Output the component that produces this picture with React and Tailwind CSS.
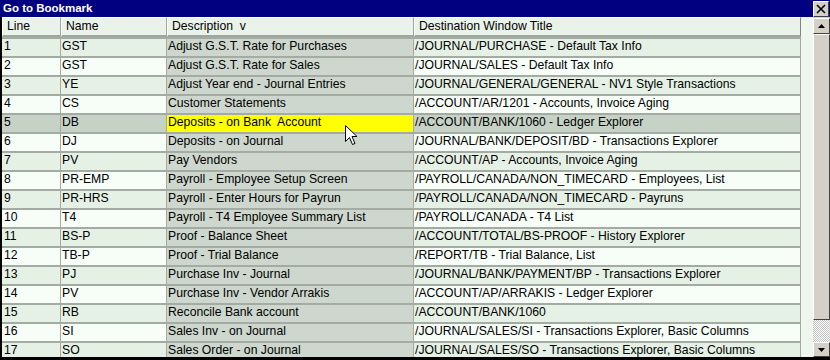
const rows = [
  ["1", "GST", "Adjust G.S.T. Rate for Purchases", "/JOURNAL/PURCHASE - Default Tax Info"],
  ["2", "GST", "Adjust G.S.T. Rate for Sales", "/JOURNAL/SALES - Default Tax Info"],
  ["3", "YE", "Adjust Year end - Journal Entries", "/JOURNAL/GENERAL/GENERAL - NV1 Style Transactions"],
  ["4", "CS", "Customer Statements", "/ACCOUNT/AR/1201 - Accounts, Invoice Aging"],
  ["5", "DB", "Deposits - on Bank  Account", "/ACCOUNT/BANK/1060 - Ledger Explorer"],
  ["6", "DJ", "Deposits - on Journal", "/JOURNAL/BANK/DEPOSIT/BD - Transactions Explorer"],
  ["7", "PV", "Pay Vendors", "/ACCOUNT/AP - Accounts, Invoice Aging"],
  ["8", "PR-EMP", "Payroll - Employee Setup Screen", "/PAYROLL/CANADA/NON_TIMECARD - Employees, List"],
  ["9", "PR-HRS", "Payroll - Enter Hours for Payrun", "/PAYROLL/CANADA/NON_TIMECARD - Payruns"],
  ["10", "T4", "Payroll - T4 Employee Summary List", "/PAYROLL/CANADA - T4 List"],
  ["11", "BS-P", "Proof - Balance Sheet", "/ACCOUNT/TOTAL/BS-PROOF - History Explorer"],
  ["12", "TB-P", "Proof - Trial Balance", "/REPORT/TB - Trial Balance, List"],
  ["13", "PJ", "Purchase Inv - Journal", "/JOURNAL/BANK/PAYMENT/BP - Transactions Explorer"],
  ["14", "PV", "Purchase Inv - Vendor Arrakis", "/ACCOUNT/AP/ARRAKIS - Ledger Explorer"],
  ["15", "RB", "Reconcile Bank account", "/ACCOUNT/BANK/1060"],
  ["16", "SI", "Sales Inv - on Journal", "/JOURNAL/SALES/SI - Transactions Explorer, Basic Columns"],
  ["17", "SO", "Sales Order - on Journal", "/JOURNAL/SALES/SO - Transactions Explorer, Basic Columns"],
];

const SELECTED = 4;

function Cursor() {
  return (
    <svg
      className="absolute left-[345px] top-[125px]"
      width="13"
      height="21"
      viewBox="0 0 13 21"
    >
      <path
        d="M0.5 0.5 L0.5 16.5 L4.5 12.5 L7.5 19.5 L10 18.5 L7 11.5 L12 11.5 Z"
        fill="#ffffff"
        stroke="#000000"
        strokeWidth="1"
      />
    </svg>
  );
}

function HeaderCell({ children, last }) {
  return (
    <div
      className={
        "flex items-center px-[4px] bg-[#eaf3ea] border-t border-l border-t-white border-l-white border-b-2 border-b-[#9ea69e] " +
        (last ? "border-r border-r-[#7e867e]" : "border-r border-r-[#9ea69e]")
      }
    >
      {children}
    </div>
  );
}

export default function App() {
  return (
    <div
      className="relative w-[830px] h-[360px] overflow-hidden bg-black text-[12.2px] leading-none text-black"
      style={{ fontFamily: '"Liberation Sans", Arial, sans-serif' }}
    >
      <div className="flex h-[17px] items-center justify-between bg-[#000080]">
        <span className="pl-[3px] pt-[1px] text-[11.5px] font-bold text-white">Go to Bookmark</span>
        <div className="mr-[1px] flex h-[16px] w-[16px] items-center justify-center border border-t-white border-l-white border-r-[#404040] border-b-[#404040] bg-[#d4d0c8]">
          <svg width="10" height="10" viewBox="0 0 10 10">
            <path d="M1 1 L9 9 M9 1 L1 9" stroke="#000" strokeWidth="1.6" />
          </svg>
        </div>
      </div>

      <div className="flex h-[343px] pl-[2px] pb-[3px]">
        <div className="w-[799px] overflow-hidden bg-[#eef6ee]">
          <div className="grid h-[20px] grid-cols-[59px_106px_247px_387px]">
            <HeaderCell>Line</HeaderCell>
            <HeaderCell>Name</HeaderCell>
            <HeaderCell>Description&nbsp;&nbsp;v</HeaderCell>
            <HeaderCell last>Destination Window Title</HeaderCell>
          </div>
          {rows.map((r, i) => {
            const sel = i === SELECTED;
            const base = sel ? "bg-[#c6d2c6]" : i % 2 === 0 ? "bg-[#e6f1e6]" : "bg-[#f7fdf7]";
            return (
              <div
                key={r[0]}
                className="grid h-[19px] grid-cols-[59px_106px_247px_387px] border-t-2 border-[#a3aba3]"
              >
                <div className={"flex items-center pb-[2px] pl-[2px] border-r border-[#a3aba3] " + base}>{r[0]}</div>
                <div className={"flex items-center pb-[2px] pl-[1px] border-r border-[#a3aba3] " + base}>{r[1]}</div>
                <div
                  className={
                    "flex items-center pb-[2px] pl-[1px] border-r border-[#a3aba3] whitespace-pre " +
                    (sel ? "bg-[#ffff00]" : "bg-[#cdd7cd]")
                  }
                >
                  {r[2]}
                </div>
                <div className={"flex items-center pb-[2px] pl-[1px] border-r border-[#a3aba3] whitespace-nowrap " + base}>
                  {r[3]}
                </div>
              </div>
            );
          })}
        </div>
        <div className="w-[12px] bg-[#eef6ee]" />
        <div className="flex w-[17px] flex-col bg-[#d4d0c8]">
          <div className="mt-[1px] flex h-[16px] items-center justify-center border border-t-white border-l-white border-r-[#404040] border-b-[#404040]">
            <svg width="7" height="4" viewBox="0 0 7 4">
              <path d="M3.5 0 L7 4 L0 4 Z" fill="#000" />
            </svg>
          </div>
          <div className="flex-1 border border-t-white border-l-white border-r-[#404040] border-b-[#404040] bg-[#d4d0c8]" />
          <div className="h-[22px] bg-[repeating-conic-gradient(#c0c0c0_0_25%,#ffffff_0_50%)] bg-[length:2px_2px]" />
          <div className="flex h-[15px] items-center justify-center border border-t-white border-l-white border-r-[#404040] border-b-[#404040]">
            <svg width="7" height="4" viewBox="0 0 7 4">
              <path d="M0 0 L7 0 L3.5 4 Z" fill="#000" />
            </svg>
          </div>
        </div>
      </div>
      <Cursor />
    </div>
  );
}
